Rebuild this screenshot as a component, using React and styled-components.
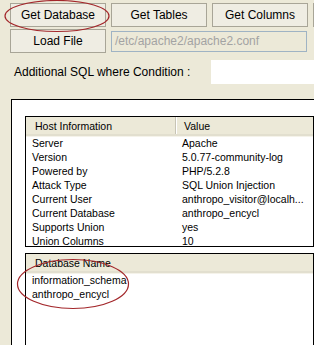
import React from "react";
import styled, { createGlobalStyle } from "styled-components";

const Global = createGlobalStyle`
  html, body { margin: 0; padding: 0; background: #ECE9D8; overflow: hidden; }
  body { font-family: "Liberation Sans", Arial, sans-serif; color: #000; }
`;

const Page = styled.div`
  width: 314px;
  height: 345px;
  overflow: hidden;
  padding: 3px 0 0 10px;
  box-sizing: border-box;
  display: flex;
  flex-direction: column;
`;

const ButtonRow = styled.div`
  display: flex;
  gap: 5px;
  height: 24px;
  width: 400px;
`;

const Row = styled.div`
  display: flex;
  align-items: center;
  gap: 5px;
  margin-top: ${(p) => p.$mt || 0}px;
`;

const Anchor = styled.div`
  position: relative;
  display: flex;
`;

const Button = styled.button`
  width: 96px;
  height: 24px;
  flex: none;
  box-sizing: border-box;
  border: 1px solid #a8a597;
  background: #efede3;
  font-family: "Liberation Sans", Arial, sans-serif;
  font-size: 12px;
  color: #000;
  padding: 0;
`;

const PathInput = styled.div`
  width: 196px;
  height: 21px;
  box-sizing: border-box;
  border: 1px solid #9fb3c4;
  background: #ECE9D8;
  color: #a3a3a3;
  font-size: 12px;
  padding-left: 3px;
  display: flex;
  align-items: center;
  white-space: nowrap;
  overflow: hidden;
`;

const CondRow = styled.div`
  display: flex;
  align-items: center;
  margin-top: 7px;
  height: 24px;
`;

const Label = styled.span`
  font-size: 12px;
  padding-left: 4px;
  width: 197px;
  flex: none;
  white-space: nowrap;
`;

const CondInput = styled.div`
  width: 120px;
  height: 24px;
  background: #fff;
  flex: none;
`;

const Panel = styled.div`
  margin-top: 15px;
  margin-left: 1px;
  width: 320px;
  flex: 1;
  border: 1px solid #000;
  border-right: none;
  border-bottom: none;
  background: #fff;
  padding: 16px 0 0 13px;
  box-sizing: border-box;
  display: flex;
  flex-direction: column;
  gap: 6px;
  position: relative;
`;

const List = styled.div`
  width: 289px;
  box-sizing: border-box;
  border: 1.5px solid #000;
  background: #fff;
  overflow: hidden;
  height: ${(p) => (p.$h ? `${p.$h}px` : "auto")};
  flex: ${(p) => (p.$grow ? 1 : "none")};
  border-bottom: ${(p) => (p.$grow ? "none" : "1.5px solid #000")};
  position: relative;
`;

const Header = styled.div`
  display: grid;
  grid-template-columns: 150px 1fr;
  height: 17px;
  background: #ECE9D8;
  border-bottom: 2px solid #e2dfcf;
  box-shadow: 0 1px 0 #f5f3ea;
  font-size: 10.5px;
`;

const HeadCell = styled.div`
  display: flex;
  align-items: center;
  padding-left: ${(p) => p.$pl || 8}px;
  border-right: ${(p) => (p.$sep ? "1px solid #c7c4b5" : "none")};
  box-shadow: ${(p) => (p.$sep ? "1px 0 0 #fff" : "none")};
  white-space: nowrap;
`;

const DataRow = styled.div`
  display: grid;
  grid-template-columns: 150px 1fr;
  height: 14px;
  font-size: 10.5px;
  line-height: 14px;
`;

const Cell = styled.div`
  padding-left: 6px;
  white-space: nowrap;
  overflow: hidden;
`;

const Item = styled.div`
  height: 14px;
  line-height: 14px;
  font-size: 10.5px;
  padding-left: 6px;
`;

const Ellipse = styled.svg`
  position: absolute;
  pointer-events: none;
  overflow: visible;
  left: ${(p) => p.$x}px;
  top: ${(p) => p.$y}px;
`;

const hostRows = [
  ["Server", "Apache"],
  ["Version", "5.0.77-community-log"],
  ["Powered by", "PHP/5.2.8"],
  ["Attack Type", "SQL Union Injection"],
  ["Current User", "anthropo_visitor@localh..."],
  ["Current Database", "anthropo_encycl"],
  ["Supports Union", "yes"],
  ["Union Columns", "10"],
];

export default function App() {
  return (
    <>
      <Global />
      <Page>
        <ButtonRow>
          <Anchor>
            <Button>Get Database</Button>
            <Ellipse $x={-6} $y={-3} width="108" height="32">
              <ellipse cx="53" cy="16" rx="52" ry="15.5" fill="none" stroke="#a3272b" strokeWidth="1.2" />
            </Ellipse>
          </Anchor>
          <Button>Get Tables</Button>
          <Button>Get Columns</Button>
          <Button aria-label="more" />
        </ButtonRow>
        <Row $mt={2}>
          <Button>Load File</Button>
          <PathInput>/etc/apache2/apache2.conf</PathInput>
        </Row>
        <CondRow>
          <Label>Additional SQL where Condition :</Label>
          <CondInput />
        </CondRow>
        <Panel>
          <List $h={131}>
            <Header>
              <HeadCell $sep $pl={9}>Host Information</HeadCell>
              <HeadCell $pl={8}>Value</HeadCell>
            </Header>
            {hostRows.map(([k, v]) => (
              <DataRow key={k}>
                <Cell>{k}</Cell>
                <Cell>{v}</Cell>
              </DataRow>
            ))}
          </List>
          <List $grow>
            <Header>
              <HeadCell $pl={9}>Database Name</HeadCell>
            </Header>
            <Item>information_schema</Item>
            <Item>anthropo_encycl</Item>
          </List>
          <Ellipse $x={6} $y={159} width="112" height="52">
            <ellipse cx="55" cy="25" rx="55.5" ry="24.5" fill="none" stroke="#a3272b" strokeWidth="1.2" />
          </Ellipse>
        </Panel>
      </Page>
    </>
  );
}
